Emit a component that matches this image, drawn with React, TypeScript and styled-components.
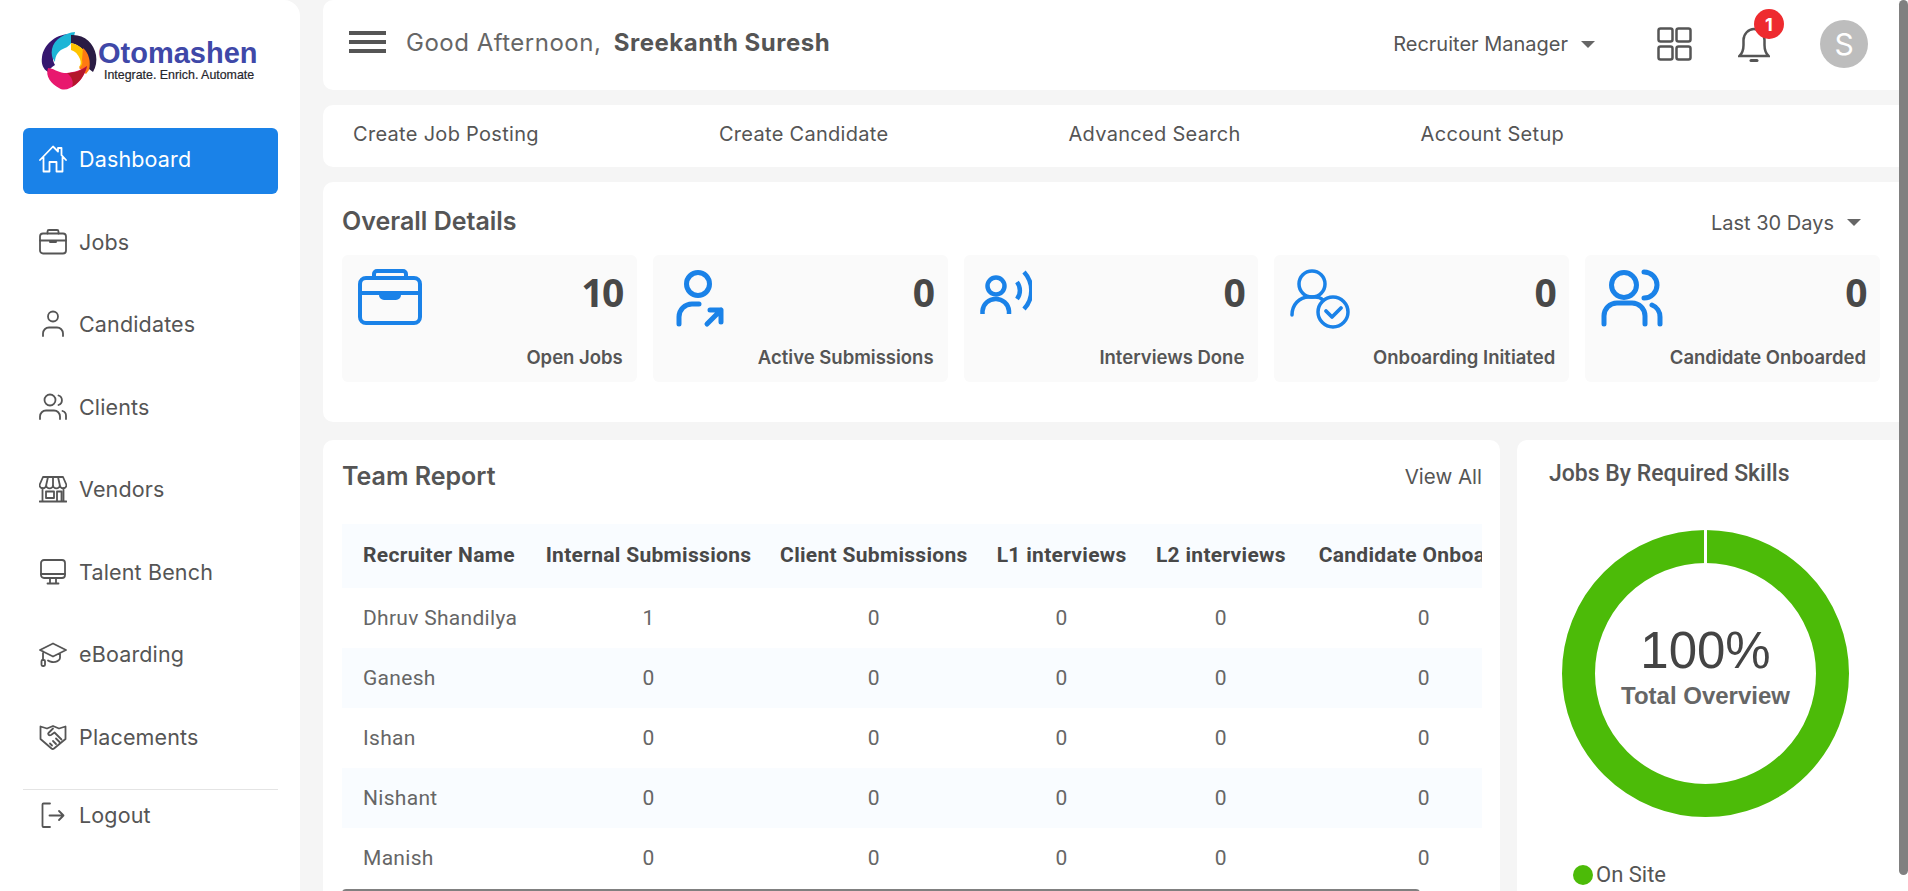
import React from 'react';
import styled, {createGlobalStyle} from 'styled-components';

const blue = '#1a82e8';
const ink = '#555555';

const GlobalStyle = createGlobalStyle`
    * { box-sizing: border-box; }
    html, body { margin: 0; height: 100%; overflow: hidden; }
    body {
        background: #f5f5f5;
        font-family: Inter, "Noto Sans", sans-serif;
        color: ${ink};
    }
`;

/* ---- icons ---- */
const NavSvg = styled.svg.attrs({viewBox: '0 0 28 28', fill: 'none', stroke: 'currentColor', strokeWidth: 1.8, strokeLinecap: 'round', strokeLinejoin: 'round'})`
    width: 28px;
    height: 28px;
    flex: none;
`;

const HomeIcon = () => (
    <NavSvg>
        <path d="M1 15 14 1.5l5 5V3h3.5v7.2L27 15M4.5 12.500V26.500h6V17h7v9.500h6V12.500"/>
    </NavSvg>
);
const BagIcon = () => (
    <NavSvg>
        <rect x="1" y="5.500" width="26" height="20" rx="3"/>
        <path d="M8.500 5.500V3.500A1.500 1.500 0 0 1 10 2h8a1.500 1.500 0 0 1 1.500 1.500v2M1 12.500h26M11 12.500v1.500h6v-1.500"/>
    </NavSvg>
);
const PersonIcon = () => (
    <NavSvg>
        <circle cx="14" cy="6.500" r="5"/>
        <path d="M4 26v-2.500A6 6 0 0 1 10 17.500h8a6 6 0 0 1 6 6V26"/>
    </NavSvg>
);
const PeopleIcon = () => (
    <NavSvg>
        <circle cx="11" cy="7" r="5.500"/>
        <path d="M19.500 2.500a5 5 0 0 1 0 9.500M1 26v-2.500a6 6 0 0 1 6-6h8a6 6 0 0 1 6 6V26M23.500 18a5 5 0 0 1 3.500 5v3"/>
    </NavSvg>
);
const StoreIcon = () => (
    <NavSvg>
        <path d="M4 2h20l3.500 8a3.300 3.300 0 0 1-6.700 0 3.400 3.400 0 0 1-6.800 0 3.400 3.400 0 0 1-6.800 0 3.300 3.300 0 0 1-6.700 0ZM9 2 7.200 10M19 2l1.800 8M14 2v8M3.500 13v13.500M24.500 13v13.500M.5 26.500h27M7 16.500h8v6.500H7ZM18 26.500v-10h4.500v10"/>
    </NavSvg>
);
const MonitorIcon = () => (
    <NavSvg>
        <rect x="2" y="2" width="24" height="18" rx="3"/>
        <path d="M2 16h24M11 20v5M17 20v5M8.500 25.500h11"/>
    </NavSvg>
);
const CapIcon = () => (
    <NavSvg>
        <path d="M14 3.500 27 10l-13 6.500L1 10ZM21 13.500v4.500c0 2.500-4 4.500-8 4-1.500-.2-3-.7-4-1.500M4 11.500V20"/>
        <rect x="2.500" y="20" width="3.500" height="6" rx="1.200"/>
    </NavSvg>
);
const HandsIcon = () => (
    <NavSvg>
        <path d="M1.500 3.500 8 5.500l6-2.500 6 2.500 6.500-2V16L15 25.500a2 2 0 0 1-2.500 0L1.500 16ZM14 5.500 9.500 10c-1 1 .5 3 2.500 2l3.500-2.500 7 7M11 20.500l2 2M14 18l3 3M17 15.500l3.500 3.500"/>
    </NavSvg>
);
const LogoutIcon = () => (
    <NavSvg>
        <path d="M11 2.500H4.500a1 1 0 0 0-1 1V25a1 1 0 0 0 1 1H11M10.500 14.500h14M20 10l4.500 4.500L20 19"/>
    </NavSvg>
);

const StatSvg = styled.svg.attrs({fill: 'none', stroke: blue, strokeLinecap: 'round', strokeLinejoin: 'round'})`
    display: block;
    flex: none;
`;

const StatBag = () => (
    <StatSvg width="64" height="56" viewBox="0 0 64 56" strokeWidth="4">
        <rect x="2" y="9" width="60" height="45" rx="6"/>
        <path d="M16 9V5a3 3 0 0 1 3-3h26a3 3 0 0 1 3 3v4M2 24h60"/>
        <path d="M23 24h18v2a3 3 0 0 1-3 3H26a3 3 0 0 1-3-3Z" fill={blue}/>
    </StatSvg>
);
const StatSubmit = () => (
    <StatSvg width="56" height="60" viewBox="-6 0 56 60" strokeWidth="5">
        <circle cx="23" cy="15" r="11.500"/>
        <path d="M4 55v-7a13 13 0 0 1 13-13h7M32 55l14-14M35 41h11v12"/>
    </StatSvg>
);
const StatInterview = () => (
    <StatSvg width="52" height="50" viewBox="0 0 52 50" strokeWidth="4.500">
        <circle cx="16" cy="17" r="8.500"/>
        <path d="M2.500 45V42A13 13 0 0 1 15.500 30 13 13 0 0 1 29 42v3M37 13a14 14 0 0 1 0 17M44 3a27 27 0 0 1 0 37" strokeLinecap="butt"/>
    </StatSvg>
);
const StatOnboard = () => (
    <StatSvg width="60" height="62" viewBox="0 0 60 62" strokeWidth="3.500">
        <circle cx="22" cy="15" r="13"/>
        <path d="M2 46c0-10 7-18 17-18h6c3 0 6 1 8 3"/>
        <circle cx="43" cy="43" r="15"/>
        <path d="M36 42l6 6 9-9" strokeWidth="3.800"/>
    </StatSvg>
);
const StatTeam = () => (
    <StatSvg width="62" height="58" viewBox="0 0 62 58" strokeWidth="5">
        <circle cx="23" cy="16" r="12.500"/>
        <path d="M43 3a12 12 0 0 1 0 26M3 55V47a13 13 0 0 1 13-13h15a13 13 0 0 1 13 13v8M51 36c5 2 8 7 8 12v7"/>
    </StatSvg>
);

const LogoMark = () => (
    <svg width="56" height="58" viewBox="0 0 56 58">
        <path d="M28 2C13 3 3 13 1 25c-1 7 1 12 6 15 1-3 4-5 7-7-3-5-3-11 1-15 3-4 8-6 13-6Z" fill="#35176f"/>
        <path d="M34 0C24 1 13 7 11 17c-1 5 0 9 3 13 0-7 4-12 10-14 5-2 8-6 10-16Z" fill="#1db5d6"/>
        <path d="M30 3c13-1 23 8 25 20 1 6 0 12-3 17l-4-3c1-10-4-23-18-26Z" fill="#2a1c44"/>
        <path d="M30 11c11 2 18 11 18 21 0 3-1 6-2 8l-8-5c2-2 2-5 1-8-2-5-5-8-9-9Z" fill="#ffc400"/>
        <path d="M42 16c6 5 8 14 6 22l-3 4-7-6c3-2 4-5 3-8Z" fill="#ff7a12"/>
        <path d="M7 36c5 0 9 4 16 5 8 0 15-2 23-7-2 10-9 19-17 22-4 2-8 2-11 0C10 52 4 44 7 36Z" fill="#e8186e"/>
        <path d="M26 41c7 0 14-2 20-7-2 9-8 17-15 21 2-5 0-10-5-14Z" fill="#b3182b"/>
        <circle cx="26" cy="29" r="8.500" fill="#fff"/>
    </svg>
);

/* ---- sidebar ---- */
const Shell = styled.div`
    display: flex;
    height: 100vh;
    overflow: hidden;
`;
const Sidebar = styled.aside`
    width: 300px;
    flex: none;
    background: #fff;
    border-radius: 0 16px 0 0;
    padding: 0 22px 0 23px;
`;
const LogoRow = styled.div`
    height: 128px;
    display: flex;
    align-items: flex-start;
    padding: 32px 0 0 18px;
    gap: 1px;
`;
const LogoText = styled.div`
    font-family: "Liberation Sans", Arial, sans-serif;
    padding-top: 6px;
`;
const LogoName = styled.div`
    font-size: 29px;
    line-height: 30px;
    font-weight: 700;
    color: #3f48a8;
`;
const LogoTag = styled.div`
    font-size: 12.400px;
    line-height: 14px;
    margin: 0 0 0 6px;
    color: #26262c;
    -webkit-text-stroke: .2px #26262c;
    white-space: nowrap;
`;
const NavList = styled.nav`
    display: flex;
    flex-direction: column;
    gap: 16.5px;
`;
const NavItem = styled.a<{ $active?: boolean }>`
    height: 66px;
    display: flex;
    align-items: center;
    gap: 12px;
    padding: 0 0 4px 16px;
    border-radius: 6px;
    font-size: 21.500px;
    letter-spacing: .15px;
    background: ${p => p.$active ? blue : 'transparent'};
    color: ${p => p.$active ? '#fff' : ink};
`;
const Divider = styled.hr`
    margin: 17px 0 0;
    border: 0;
    border-top: 1px solid #e4e4e4;
`;
const LogoutItem = styled(NavItem)`
    height: 54px;
`;

/* ---- main column ---- */
const Main = styled.main`
    flex: 1;
    min-width: 0;
    padding-left: 23px;
    overflow: hidden;
`;
const PageRail = styled.div`
    width: 9px;
    flex: none;
    background: #fff;
`;
const PageThumb = styled.div`
    height: 875px;
    background: #808080;
    border-radius: 5px;
`;
const Header = styled.header`
    height: 90px;
    background: #fff;
    border-radius: 10px 0 0 10px;
    display: flex;
    align-items: center;
    padding: 0 31px 2px 26px;
`;
const Burger = styled.div`
    width: 37px;
    height: 22px;
    border-top: 4px solid ${ink};
    border-bottom: 4px solid ${ink};
    position: relative;
    margin-right: 20px;
    margin-top: -4px;
    &::after {
        content: '';
        position: absolute;
        left: 0;
        right: 0;
        top: 5px;
        height: 4px;
        background: ${ink};
    }
`;
const Greeting = styled.div`
    font-size: 24px;
    letter-spacing: .5px;
    margin-top: -4px;
    color: #666;
    flex: 1;
    white-space: pre;
`;
const Strong = styled.strong`
    font-weight: 700;
    margin-left: -2px;
    color: ${ink};
`;
const Caret = styled.span`
    display: inline-block;
    width: 0;
    height: 0;
    border-left: 7px solid transparent;
    border-right: 7px solid transparent;
    border-top: 7px solid #666;
`;
const Dropdown = styled.div`
    display: flex;
    align-items: center;
    gap: 13px;
    font-size: 20px;
    color: ${ink};
`;
const RoleDropdown = styled(Dropdown)`
    margin-right: 62px;
`;
const GridIcon = styled.svg`
    margin-right: 46px;
    display: block;
`;
const BellWrap = styled.div`
    position: relative;
    width: 32px;
    height: 38px;
    margin-right: 50px;
`;
const Badge = styled.span`
    position: absolute;
    left: 16px;
    top: -16px;
    width: 30px;
    height: 30px;
    border-radius: 50%;
    background: #ee2b2f;
    color: #fff;
    font-size: 18px;
    font-weight: 700;
    display: flex;
    align-items: center;
    justify-content: center;
`;
const Avatar = styled.div`
    width: 48px;
    height: 48px;
    border-radius: 50%;
    background: #bdbdbd;
    color: #fff;
    font-size: 30px;
    display: flex;
    align-items: center;
    justify-content: center;
`;
const ActionBar = styled.div`
    height: 62px;
    margin-top: 15px;
    background: #fff;
    border-radius: 10px 0 0 10px;
    display: flex;
    align-items: center;
    gap: 180px;
    padding: 0 0 4px 30px;
    font-size: 20px;
    letter-spacing: .3px;
`;
const OverallCard = styled.section`
    height: 240px;
    margin-top: 15px;
    background: #fff;
    border-radius: 10px 0 0 10px;
    padding: 24px 19px 0;
`;
const CardHead = styled.div`
    display: flex;
    align-items: center;
    justify-content: space-between;
`;
const CardTitle = styled.h2`
    margin: 0;
    font-size: 25px;
    font-weight: 600;
    color: ${ink};
`;
const PeriodDropdown = styled(Dropdown)`
    padding: 3px 19px 0 0;
`;
const StatGrid = styled.div`
    display: grid;
    grid-template-columns: repeat(5, 1fr);
    gap: 16px;
    margin-top: 19px;
`;
const StatTile = styled.div`
    height: 127px;
    background: #fafafa;
    border-radius: 6px;
    padding: 14px 14px 14px 16px;
    display: flex;
    flex-direction: column;
    justify-content: space-between;
`;
const StatTop = styled.div`
    display: flex;
    align-items: flex-start;
    justify-content: space-between;
`;
const StatValue = styled.div`
    font-size: 39px;
    font-weight: 700;
    letter-spacing: -1.500px;
    font-family: "Open Sans", sans-serif;
    line-height: 46px;
    color: #484848;
`;
const StatLabel = styled.div`
    font-size: 18.500px;
    font-weight: 600;
    text-align: right;
    color: ${ink};
`;
const BottomRow = styled.div`
    display: grid;
    grid-template-columns: 1177px 1fr;
    gap: 17px;
    margin-top: 18px;
    height: 467px;
`;
const TeamCard = styled.section`
    background: #fff;
    border-radius: 10px;
    padding: 21px 18px 0 19px;
`;
const ViewAll = styled.a`
    font-size: 20.500px;
    color: ${ink};
`;
const TableScroller = styled.div`
    margin-top: 33px;
    overflow: hidden;
`;
const TableThumb = styled.div`
    width: 1078px;
    height: 8px;
    margin-top: 1px;
    background: #808080;
    border-radius: 5px;
`;
const Table = styled.table`
    table-layout: fixed;
    width: 1205px;
    border-collapse: collapse;
    font-family: Roboto, sans-serif;
    font-size: 21px;
    letter-spacing: .3px;
`;
const Col = styled.col<{ $w: number }>`
    width: ${p => p.$w}px;
`;
const Row = styled.tr<{ $shaded?: boolean }>`
    height: 60px;
    background: ${p => p.$shaded ? '#f9fcff' : '#fff'};
`;
const HeadRow = styled(Row)`
    height: 64px;
`;
const HeadCell = styled.th`
    padding: 0 0 2px;
    text-align: center;
    font-weight: 700;
    white-space: nowrap;
    color: #484848;
    &:first-child { text-align: left; padding-left: 21px; }
`;
const Cell = styled.td`
    text-align: center;
    color: #666;
    white-space: nowrap;
    &:first-child { text-align: left; padding-left: 21px; }
`;
const SkillsCard = styled.section`
    background: #fff;
    border-radius: 10px 0 0 10px;
    padding: 20px 0 0 32px;
`;
const SkillsTitle = styled.h3`
    margin: 0;
    font-family: Roboto, sans-serif;
    font-size: 23px;
    font-weight: 500;
    color: ${ink};
`;
const Donut = styled.div`
    position: relative;
    width: 287px;
    height: 287px;
    margin: 43px 0 0 13px;
`;
const DonutLabel = styled.div`
    position: absolute;
    inset: 0;
    display: flex;
    flex-direction: column;
    align-items: center;
    padding-top: 90px;
    font-family: "Liberation Sans", Arial, sans-serif;
`;
const DonutValue = styled.div`
    font-size: 51px;
    line-height: 62px;
    color: #444;
`;
const DonutCaption = styled.div`
    font-size: 24px;
    line-height: 28px;
    font-weight: 700;
    color: #666;
`;
const Legend = styled.div`
    display: flex;
    align-items: center;
    gap: 3px;
    margin: 45px 0 0 24px;
    font-family: Roboto, sans-serif;
    font-size: 22px;
`;
const LegendDot = styled.span`
    width: 20px;
    height: 20px;
    border-radius: 50%;
    background: #4cbb08;
`;

const nav = [
    {label: 'Dashboard', icon: <HomeIcon/>, active: true},
    {label: 'Jobs', icon: <BagIcon/>},
    {label: 'Candidates', icon: <PersonIcon/>},
    {label: 'Clients', icon: <PeopleIcon/>},
    {label: 'Vendors', icon: <StoreIcon/>},
    {label: 'Talent Bench', icon: <MonitorIcon/>},
    {label: 'eBoarding', icon: <CapIcon/>},
    {label: 'Placements', icon: <HandsIcon/>},
];

const stats = [
    {value: 10, label: 'Open Jobs', icon: <StatBag/>},
    {value: 0, label: 'Active Submissions', icon: <StatSubmit/>},
    {value: 0, label: 'Interviews Done', icon: <StatInterview/>},
    {value: 0, label: 'Onboarding Initiated', icon: <StatOnboard/>},
    {value: 0, label: 'Candidate Onboarded', icon: <StatTeam/>},
];

const columns = ['Recruiter Name', 'Internal Submissions', 'Client Submissions', 'L1 interviews', 'L2 interviews', 'Candidate Onboarded'];
const widths = [189, 234, 216, 159, 159, 246];
const team = [
    ['Dhruv Shandilya', 1, 0, 0, 0, 0],
    ['Ganesh', 0, 0, 0, 0, 0],
    ['Ishan', 0, 0, 0, 0, 0],
    ['Nishant', 0, 0, 0, 0, 0],
    ['Manish', 0, 0, 0, 0, 0],
];

export default function App() {
    return (
        <Shell>
            <GlobalStyle/>
            <Sidebar>
                <LogoRow>
                    <LogoMark/>
                    <LogoText>
                        <LogoName>Otomashen</LogoName>
                        <LogoTag>Integrate. Enrich. Automate</LogoTag>
                    </LogoText>
                </LogoRow>
                <NavList>
                    {nav.map(item => (
                        <NavItem key={item.label} $active={item.active}>{item.icon}{item.label}</NavItem>
                    ))}
                </NavList>
                <Divider/>
                <LogoutItem><LogoutIcon/>Logout</LogoutItem>
            </Sidebar>
            <Main>
                <Header>
                    <Burger/>
                    <Greeting>Good Afternoon,  <Strong>Sreekanth Suresh</Strong></Greeting>
                    <RoleDropdown>Recruiter Manager <Caret/></RoleDropdown>
                    <GridIcon width="35" height="34" viewBox="0 0 35 34" fill="none" stroke={ink} strokeWidth="2.500">
                        <rect x="1.500" y="1.500" width="14" height="13" rx="2"/>
                        <rect x="19.500" y="1.500" width="14" height="13" rx="2"/>
                        <rect x="1.500" y="19.500" width="14" height="13" rx="2"/>
                        <rect x="19.500" y="19.500" width="14" height="13" rx="2"/>
                    </GridIcon>
                    <BellWrap>
                        <svg width="32" height="38" viewBox="0 0 32 38" fill="none" stroke={ink} strokeWidth="2.500" strokeLinecap="round">
                            <path d="M1.500 31h29c-3-3-4-6-4-11v-5c0-6-5-11-10.500-11S5.500 9 5.500 15v5c0 5-1 8-4 11Z"/>
                            <path d="M13 35.500h6" strokeWidth="3"/>
                        </svg>
                        <Badge>1</Badge>
                    </BellWrap>
                    <Avatar>S</Avatar>
                </Header>
                <ActionBar>
                    <span>Create Job Posting</span>
                    <span>Create Candidate</span>
                    <span>Advanced Search</span>
                    <span>Account Setup</span>
                </ActionBar>
                <OverallCard>
                    <CardHead>
                        <CardTitle>Overall Details</CardTitle>
                        <PeriodDropdown>Last 30 Days <Caret/></PeriodDropdown>
                    </CardHead>
                    <StatGrid>
                        {stats.map(stat => (
                            <StatTile key={stat.label}>
                                <StatTop>
                                    {stat.icon}
                                    <StatValue>{stat.value}</StatValue>
                                </StatTop>
                                <StatLabel>{stat.label}</StatLabel>
                            </StatTile>
                        ))}
                    </StatGrid>
                </OverallCard>
                <BottomRow>
                    <TeamCard>
                        <CardHead>
                            <CardTitle>Team Report</CardTitle>
                            <ViewAll>View All</ViewAll>
                        </CardHead>
                        <TableScroller>
                            <Table>
                                <colgroup>
                                    {widths.map((w, i) => <Col key={i} $w={w}/>)}
                                </colgroup>
                                <thead>
                                    <HeadRow $shaded>
                                        {columns.map(c => <HeadCell key={c}>{c}</HeadCell>)}
                                    </HeadRow>
                                </thead>
                                <tbody>
                                    {team.map((row, i) => (
                                        <Row key={row[0]} $shaded={i % 2 === 1}>
                                            {row.map((v, j) => <Cell key={j}>{v}</Cell>)}
                                        </Row>
                                    ))}
                                </tbody>
                            </Table>
                        </TableScroller>
                        <TableThumb/>
                    </TeamCard>
                    <SkillsCard>
                        <SkillsTitle>Jobs By Required Skills</SkillsTitle>
                        <Donut>
                            <svg width="287" height="287" viewBox="0 0 287 287">
                                <circle cx="143.500" cy="143.500" r="127" fill="none" stroke="#4cbb08" strokeWidth="33"/>
                                <path d="M143.500 0v34" stroke="#fff" strokeWidth="3"/>
                            </svg>
                            <DonutLabel>
                                <DonutValue>100%</DonutValue>
                                <DonutCaption>Total Overview</DonutCaption>
                            </DonutLabel>
                        </Donut>
                        <Legend><LegendDot/>On Site</Legend>
                    </SkillsCard>
                </BottomRow>
            </Main>
            <PageRail><PageThumb/></PageRail>
        </Shell>
    );
}
